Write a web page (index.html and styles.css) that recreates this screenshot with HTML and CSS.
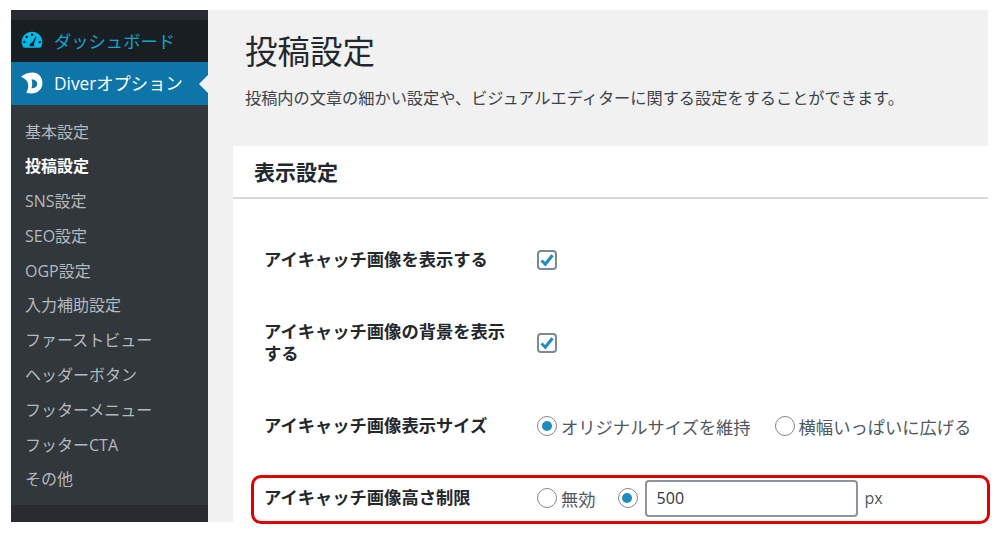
FILE: index.html
```html
<!DOCTYPE html>
<html lang="ja">
  <head>
    <meta charset="UTF-8" />
    <title>投稿設定</title>
    <link rel="stylesheet" href="styles.css">
  </head>
  <body>
    <div class="shot">
      <!-- Sidebar -->
      <div class="sidebar">
        <div class="menu-top">
          <svg class="menu-icon" viewBox="0 0 20 20"><path fill="#00b9eb" fill-rule="evenodd" d="M10 2.500C4.800 2.500.6 6.600.6 11.700c0 2 .6 3.700 1.700 5.300h15.400c1.100-1.600 1.700-3.300 1.700-5.300C19.400 6.600 15.200 2.500 10 2.500zM10 4.200a1.100 1.100 0 1 1 0 2.200 1.100 1.100 0 0 1 0-2.200zM5.200 6.100a1.100 1.100 0 1 1 0 2.200 1.100 1.100 0 0 1 0-2.200zM3 10.700a1.100 1.100 0 1 1 0 2.200 1.100 1.100 0 0 1 0-2.200zM17 10.700a1.100 1.100 0 1 1 0 2.200 1.100 1.100 0 0 1 0-2.200zM13.300 6.800l.9.5-2.600 6.200c.5.700.5 1.600 0 2.200H8.400c-.7-.9-.5-2.100.4-2.800.4-.3.900-.4 1.300-.3z"/></svg>
          <span>ダッシュボード</span>
        </div>
        <div class="menu-active">
          <svg class="menu-icon" viewBox="1 1 19 19"><path fill="#fff" fill-rule="evenodd" d="M1 5C4 2.500 8 1.500 11 1.500c5 0 8.500 3.800 8.500 9 0 5.500-4 9-9.500 9-1.500 0-3-.2-4.500-.8 2-2.700 2.300-6.200 1-9.200C5.500 7.500 3.500 6 1 5zM10 7.500c1 2.500 1 5 0 7.500 3 .5 5-1.500 5-4 0-2.200-2.500-3.800-5-3.500z"/></svg>
          <span>Diverオプション</span>
          <i class="arrow"></i>
        </div>
        <ul class="submenu">
          <li>基本設定</li>
          <li class="current">投稿設定</li>
          <li>SNS設定</li>
          <li>SEO設定</li>
          <li>OGP設定</li>
          <li>入力補助設定</li>
          <li>ファーストビュー</li>
          <li>ヘッダーボタン</li>
          <li>フッターメニュー</li>
          <li>フッターCTA</li>
          <li>その他</li>
        </ul>
      </div>

      <!-- Main -->
      <div class="main">
        <h1>投稿設定</h1>
        <p class="lead">投稿内の文章の細かい設定や、ビジュアルエディターに関する設定をすることができます。</p>
        <div class="card">
          <h2>表示設定</h2>
          <div class="rows">
            <div class="row row-first">
              <div class="label">アイキャッチ画像を表示する</div>
              <div class="field"><span class="check"><svg viewBox="2 2 16 16"><path d="M4.500 10.500l3.800 3.800 7.200-9" fill="none" stroke="#1e8cbe" stroke-width="3"/></svg></span></div>
            </div>
            <div class="row row-second">
              <div class="label">アイキャッチ画像の背景を表示する</div>
              <div class="field"><span class="check"><svg viewBox="2 2 16 16"><path d="M4.500 10.500l3.800 3.800 7.200-9" fill="none" stroke="#1e8cbe" stroke-width="3"/></svg></span></div>
            </div>
            <div class="row row-third">
              <div class="label">アイキャッチ画像表示サイズ</div>
              <div class="field">
                <span class="radio on"></span><span class="opt">オリジナルサイズを維持</span>
                <span class="radio"></span><span>横幅いっぱいに広げる</span>
              </div>
            </div>
            <div class="row row-last">
              <div class="label">アイキャッチ画像高さ制限</div>
              <div class="field">
                <span class="radio"></span><span class="opt-short">無効</span>
                <span class="radio on"></span>
                <span class="text-input">500</span>
                <span class="unit">px</span>
              </div>
            </div>
          </div>
        </div>
      </div>
    </div>
    <!-- Annotation -->
    <div class="highlight"></div>
  </body>
</html>
```

FILE: styles.css
```css
* {
  box-sizing: border-box;
}

html,
body {
  height: 540px;
  overflow: hidden;
}

body {
  margin: 0;
  padding: 10px 0 0 11px;
  background: #fff;
  color: #3c434a;
  font-family: "Open Sans", "Noto Sans CJK JP", sans-serif;
  font-size: 16px;
  position: relative;
}

.shot {
  display: flex;
  width: 977px;
  height: 512px;
  overflow: hidden;
}

/* Sidebar */
.sidebar {
  width: 197px;
  flex: none;
  display: flex;
  flex-direction: column;
  padding-top: 10px;
  background: #282c30;
}

.menu-top,
.menu-active {
  display: flex;
  align-items: center;
  padding-left: 10px;
  padding-bottom: 2px;
  font-size: 17.300px;
}

.menu-top {
  height: 42px;
  background: #191e23;
  color: #12a5d2;
}

.menu-active {
  height: 43px;
  background: #0d75a8;
  color: #fff;
  position: relative;
}

.menu-icon {
  width: 22px;
  height: 22px;
  margin-right: 11px;
  flex: none;
}

.arrow {
  position: absolute;
  right: 0;
  top: 13px;
  border: 9px solid transparent;
  border-right-color: #f1f1f1;
  border-left-width: 0;
}

.submenu {
  list-style: none;
  margin: 0;
  padding: 9.500px 0 9px 14px;
  background: #32373c;
  color: #b4b9be;
  height: 400px;
}

.submenu li {
  height: 34.800px;
  line-height: 34.800px;
  white-space: nowrap;
}

.submenu .current {
  color: #fff;
  font-weight: 700;
}

/* Main */
.main {
  flex: 1;
  min-width: 0;
  background: #f1f1f1;
  padding: 0 0 0 25px;
}

h1 {
  margin: 23px 0 0 12px;
  font-size: 32.500px;
  font-weight: 400;
  line-height: 38px;
  color: #23282d;
}

.lead {
  margin: 14px 0 0 12px;
  font-size: 16.200px;
  line-height: 26px;
  white-space: nowrap;
}

.card {
  margin-top: 35px;
  background: #fff;
  height: 400px;
}

h2 {
  margin: 0;
  height: 53px;
  padding-left: 21px;
  border-bottom: 2px solid #d8d8d8;
  font-size: 21px;
  font-weight: 700;
  line-height: 52px;
  color: #23282d;
}

.rows {
  padding-left: 31px;
}

.row {
  display: flex;
  align-items: center;
}

.row-first {
  margin-top: 41px;
  height: 40px;
}

.row-second {
  margin-top: 38px;
  height: 50px;
}

.row-third {
  margin-top: 43px;
  height: 30px;
}

.row-last {
  margin-top: 37px;
  height: 40px;
}

.label {
  width: 245px;
  margin-right: 28px;
  flex: none;
  font-size: 17.300px;
  font-weight: 700;
  line-height: 22px;
  color: #23282d;
}

.field {
  display: flex;
  align-items: center;
  font-size: 17.300px;
  color: #50575e;
}

.check {
  display: block;
  width: 20px;
  height: 20px;
  border: 2px solid #7e8993;
  border-radius: 4px;
  background: #fff;
}

.check svg {
  display: block;
  width: 100%;
  height: 100%;
}

.radio {
  width: 20px;
  height: 20px;
  flex: none;
  margin-right: 4px;
  border: 1.500px solid #7e8993;
  border-radius: 50%;
  background: #fff;
  position: relative;
}

.radio.on::after {
  content: "";
  position: absolute;
  left: 3.500px;
  top: 3.500px;
  width: 10px;
  height: 10px;
  border-radius: 50%;
  background: #1e8cbe;
}

.opt {
  margin-right: 24px;
}

.opt-short {
  margin-right: 22px;
}

.text-input {
  display: block;
  width: 213px;
  height: 37px;
  margin-left: 3px;
  padding-left: 10px;
  border: 2px solid #8c959d;
  border-radius: 4px;
  background: #fff;
  line-height: 33px;
  font-size: 16px;
  color: #32373c;
}

.unit {
  margin-left: 7px;
  font-size: 16px;
}

/* Annotation */
.highlight {
  position: absolute;
  left: 251px;
  top: 475px;
  width: 739px;
  height: 49px;
  border: 3px solid #e00000;
  border-radius: 10px;
}
```
